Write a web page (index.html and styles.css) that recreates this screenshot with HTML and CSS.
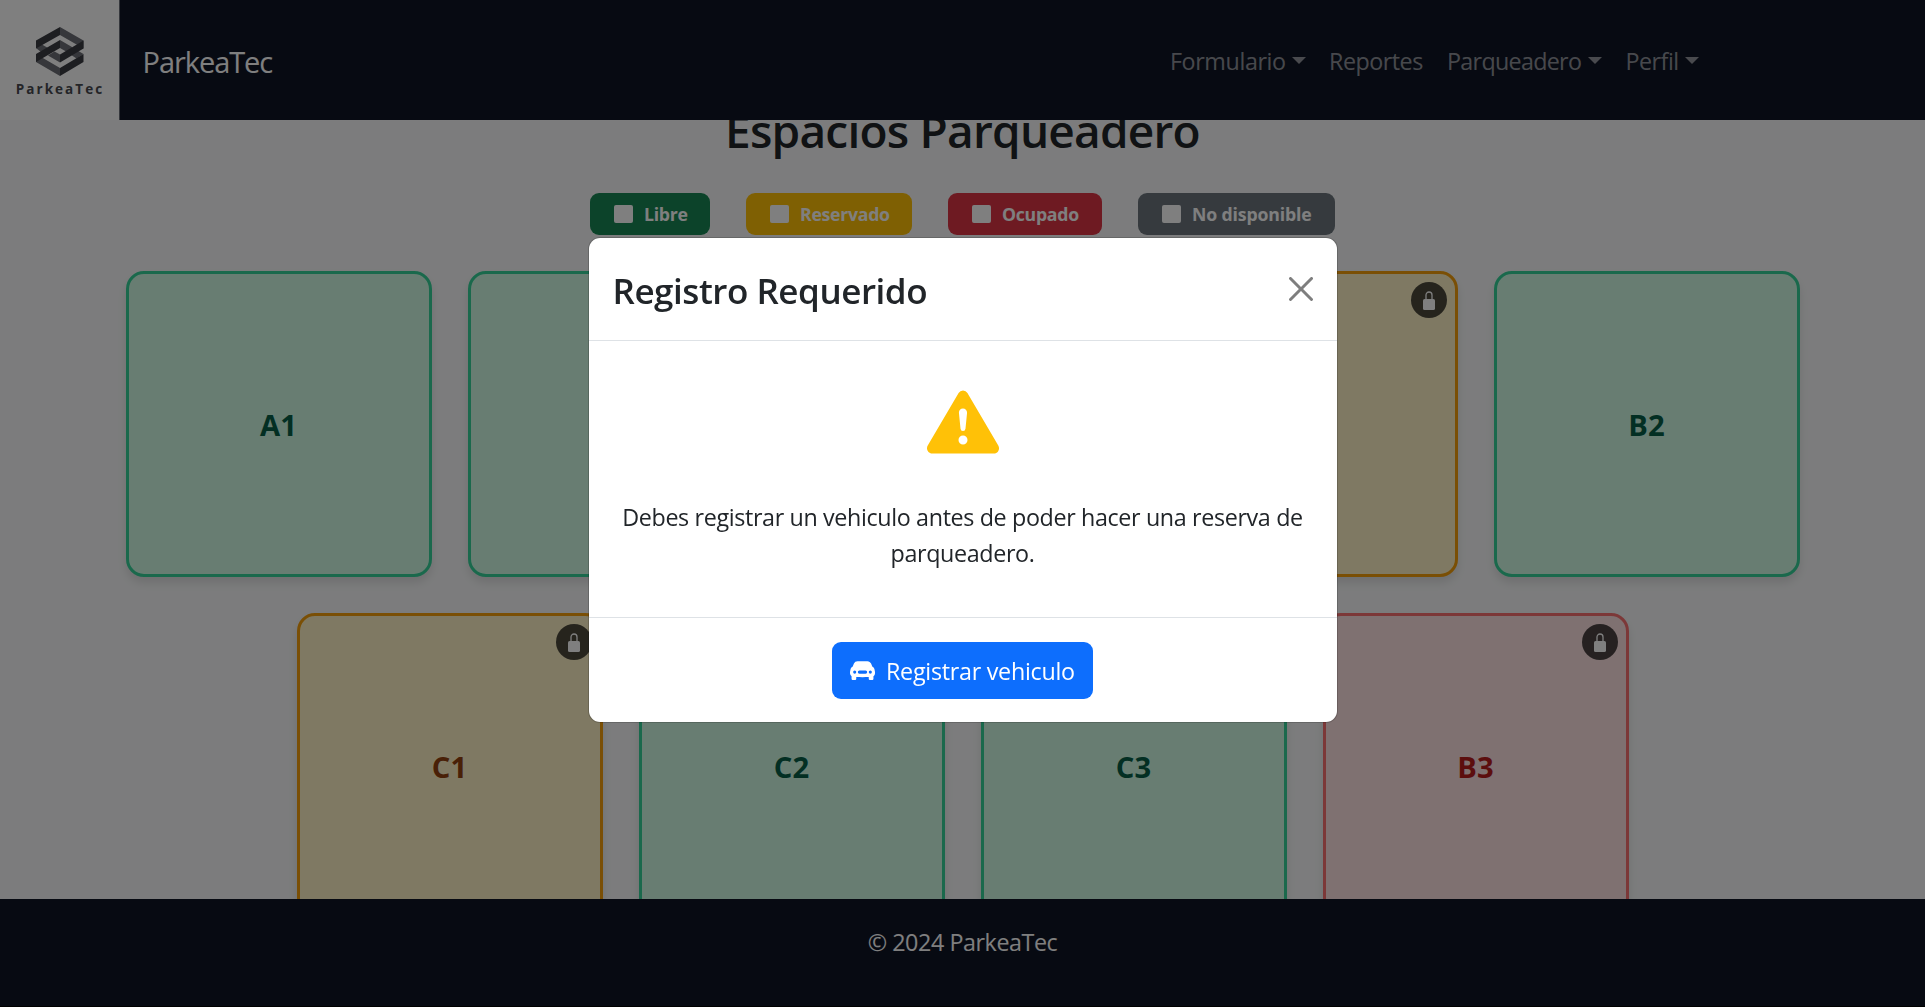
FILE: index.html
```
<!DOCTYPE html>
<html lang="es">
<head>
<meta charset="utf-8">
<title>ParkeaTec</title>
<link rel="stylesheet" href="styles.css">
</head>
<body>
<svg class="sprite" aria-hidden="true">
  <symbol id="lock" viewBox="0 0 12 19">
    <path d="M3 9V4a3 3 0 0 1 6 0v5" fill="none" stroke="currentColor" stroke-width="1.3"/>
    <rect x="0" y="8" width="12" height="11" rx="1.6" fill="currentColor"/>
  </symbol>
</svg>
<header class="navbar">
  <div class="logo">
    <svg class="logo-mark" viewBox="0 0 48 49">
      <path fill="#6d6f76" d="M24 0l23.500 13.500v8L24 8zM24 13l12 7v8l-12-7zM24 35.500l-12-7 6.500-4L24 27.500zM0 27v8l24 14v-8zM0 14v7l5 4 7-4zM47.500 27l-6-3.500-7 4 6 4z"/>
      <path fill="#3b3c43" d="M24 0L0 13.500v8L24 8zM24 13L0 27v8l24-14zM47.500 13.500L24 27.500v8l23.500-14zM47.500 27L24 41v8l23.500-14z"/>
    </svg>
    <span class="logo-name">ParkeaTec</span>
  </div>
  <a class="brand">ParkeaTec</a>
  <nav class="links">
    <a class="link formulario">Formulario<i class="caret"></i></a>
    <a class="link reportes">Reportes</a>
    <a class="link parqueadero">Parqueadero<i class="caret"></i></a>
    <a class="link">Perfil<i class="caret"></i></a>
  </nav>
</header>
<main class="content">
  <h1 class="title">Espacios Parqueadero</h1>
  <div class="legend">
    <span class="tag tag-free"><i class="box"></i>Libre</span>
    <span class="tag tag-reserved"><i class="box"></i>Reservado</span>
    <span class="tag tag-busy"><i class="box"></i>Ocupado</span>
    <span class="tag tag-off"><i class="box"></i>No disponible</span>
  </div>
  <div class="spaces">
    <div class="space free">A1</div>
    <div class="space free">A2</div>
    <div class="space free">A3</div>
    <div class="space reserved">B1<span class="lock"><svg><use href="#lock"/></svg></span></div>
    <div class="space free">B2</div>
    <div class="space reserved">C1<span class="lock"><svg><use href="#lock"/></svg></span></div>
    <div class="space free">C2</div>
    <div class="space free">C3</div>
    <div class="space busy">B3<span class="lock"><svg><use href="#lock"/></svg></span></div>
  </div>
</main>
<footer class="footer">© 2024 ParkeaTec</footer>
<div class="backdrop">
  <section class="modal">
    <div class="modal-header">
      <h2 class="modal-title">Registro Requerido</h2>
      <svg class="close" viewBox="0 0 16 16"><path d="M.293.293a1 1 0 0 1 1.414 0L8 6.586 14.293.293a1 1 0 1 1 1.414 1.414L9.414 8l6.293 6.293a1 1 0 0 1-1.414 1.414L8 9.414l-6.293 6.293a1 1 0 0 1-1.414-1.414L6.586 8 .293 1.707a1 1 0 0 1 0-1.414z"/></svg>
    </div>
    <div class="modal-body">
      <svg class="warning" viewBox="0 0 16 16"><path d="M8.982 1.566a1.13 1.13 0 0 0-1.96 0L.165 13.233c-.457.778.091 1.767.98 1.767h13.713c.889 0 1.438-.99.98-1.767L8.982 1.566zM8 5c.535 0 .954.462.9.995l-.35 3.507a.552.552 0 0 1-1.1 0L7.100 5.995A.905.905 0 0 1 8 5zm.002 6a1 1 0 1 1 0 2 1 1 0 0 1 0-2z"/></svg>
      <p class="message">Debes registrar un vehiculo antes de poder hacer una reserva de parqueadero.</p>
    </div>
    <div class="modal-footer">
      <button class="button">
        <svg class="car" viewBox="0 0 16 16"><path fill-rule="evenodd" d="M2.520 3.515A2.500 2.500 0 0 1 4.820 2h6.362c1 0 1.904.596 2.298 1.515l.792 1.848c.075.175.21.319.38.404.5.25.855.715.965 1.262l.335 1.679c.033.161.049.325.049.49v.413c0 .814-.39 1.543-1 1.997V13.500a.5.5 0 0 1-.5.5h-2a.5.5 0 0 1-.5-.5v-1.338c-1.292.048-2.745.088-4 .088s-2.708-.04-4-.088V13.500a.5.5 0 0 1-.5.5h-2a.5.5 0 0 1-.5-.5v-1.892c-.61-.454-1-1.183-1-1.997v-.413a2.500 2.500 0 0 1 .049-.49l.335-1.680c.11-.546.465-1.012.964-1.261a.807.807 0 0 0 .381-.404l.792-1.848ZM3 10a1 1 0 1 0 0-2 1 1 0 0 0 0 2Zm10 0a1 1 0 1 0 0-2 1 1 0 0 0 0 2ZM6 8a1 1 0 0 0 0 2h4a1 1 0 1 0 0-2H6Z"/></svg>
        <span class="button-label">Registrar vehiculo</span>
      </button>
    </div>
  </section>
</div>
</body>
</html>
```
FILE: styles.css
```
* { box-sizing: border-box; }

body {
  margin: 0;
  height: 1007px;
  display: flex;
  flex-direction: column;
  overflow: hidden;
  background: #f8f9fa;
  color: #212529;
  font-family: "Open Sans", "Noto Sans", sans-serif;
}

h1, h2, p { margin: 0; }

.sprite { position: absolute; width: 0; height: 0; }

/* Navigation */
.navbar {
  flex: none;
  position: relative;
  z-index: 1;
  height: 120px;
  display: flex;
  align-items: center;
  background: #0f1525;
}

.logo {
  width: 120px;
  height: 120px;
  padding-top: 27px;
  display: flex;
  flex-direction: column;
  align-items: center;
  background: #fff;
  border-right: 1px solid #6b6f78;
}

.logo-mark { width: 48px; height: 49px; display: block; }

.logo-name {
  margin-top: 4px;
  font-size: 13.500px;
  line-height: 18px;
  font-weight: 700;
  letter-spacing: 2.050px;
  padding-left: 1px;
  color: #484a50;
}

.brand {
  margin-left: 22.500px;
  padding-top: 2px;
  font-size: 29px;
  letter-spacing: -1.060px;
  color: #fff;
}

.links {
  margin: 2px 0 0 auto;
  padding-right: 224.500px;
  display: grid;
  grid-template-columns: 159px 118px 178.500px 75px;
  font-size: 23.300px;
  color: rgba(255, 255, 255, .55);
}

.link { display: flex; align-items: center; letter-spacing: -.5px; }
.formulario { letter-spacing: -.4px; }
.reportes { letter-spacing: -.5px; }
.parqueadero { letter-spacing: -.7px; }

.caret {
  margin-left: 6.500px;
  margin-bottom: 2px;
  border: 7px solid transparent;
  border-top-color: currentColor;
  border-bottom: 0;
}

/* Parking spaces */
.content {
  flex: 1;
  min-height: 0;
  margin-top: -19px;
  display: flex;
  flex-direction: column;
  align-items: center;
  overflow: hidden;
}

.title {
  font-size: 46px;
  line-height: 58px;
  font-weight: 600;
  letter-spacing: -.78px;
}

.legend { margin-top: 34px; display: flex; gap: 36px; }

.tag {
  height: 42px;
  padding-left: 24px;
  display: flex;
  align-items: center;
  gap: 11px;
  border-radius: 9px;
  color: #fff;
  font-size: 17.700px;
  font-weight: 700;
  letter-spacing: -.28px;
}

.tag-free { width: 120px; background: #198754; }
.tag-reserved { width: 166px; background: #ffc107; }
.tag-busy { width: 154px; background: #dc3545; }
.tag-off { width: 197px; background: #6c757d; letter-spacing: -.15px; }

.box { width: 19px; height: 18px; border-radius: 2px; background: #fff; }

.spaces {
  width: 1674px;
  margin-top: 36px;
  display: flex;
  flex-wrap: wrap;
  justify-content: center;
  gap: 36px;
}

.space {
  position: relative;
  width: 306px;
  height: 306px;
  padding-top: 1px;
  display: flex;
  align-items: center;
  justify-content: center;
  border: 3px solid;
  border-radius: 18px;
  font-size: 29.200px;
  font-weight: 700;
  box-shadow: 0 6px 9px rgba(0, 0, 0, .1);
}

.free { background: #d1fae5; border-color: #34d399; color: #065f46; }
.reserved { background: #fef3c7; border-color: #f59e0b; color: #92400e; }
.busy { background: #fee2e2; border-color: #f87171; color: #b91c1c; }

.lock {
  position: absolute;
  top: 8px;
  right: 8px;
  width: 36px;
  height: 36px;
  display: flex;
  align-items: center;
  justify-content: center;
  border-radius: 50%;
  background: rgba(0, 0, 0, .7);
  color: #fff;
}

.lock svg { width: 12px; height: 19px; }

/* Footer */
.footer {
  flex: none;
  position: relative;
  height: 108px;
  padding-top: 27px;
  background: #0f1525;
  border-bottom: 1px solid #000;
  color: #fff;
  font-size: 23.300px;
  line-height: 33px;
  letter-spacing: -.43px;
  text-align: center;
}

/* Dialog */
.backdrop {
  position: fixed;
  inset: 0;
  z-index: 2;
  display: flex;
  justify-content: center;
  align-items: flex-start;
  padding-top: 237px;
  background: rgba(0, 0, 0, .5);
}

.modal {
  width: 750px;
  background: #fff;
  background-clip: padding-box;
  border: 1px solid rgba(0, 0, 0, .175);
  border-radius: 12px;
}

.modal-header {
  height: 103px;
  padding: 0 24px 0 24px;
  display: flex;
  align-items: center;
  justify-content: space-between;
  border-bottom: 1px solid #dee2e6;
}

.modal-title {
  padding: 3px 0 0 0;
  font-size: 35px;
  font-weight: 600;
  letter-spacing: -.46px;
}

.close { width: 24px; height: 24px; opacity: .5; }

.modal-body {
  height: 276px;
  padding: 45px 24px 0;
  text-align: center;
}

.warning { display: block; width: 72px; height: 72px; margin: 0 auto; fill: #ffc107; }

.message {
  margin-top: 41px;
  font-size: 23.300px;
  line-height: 36px;
  letter-spacing: -.36px;
}

.modal-footer {
  height: 105px;
  display: flex;
  align-items: center;
  justify-content: center;
  border-top: 1px solid #dee2e6;
}

.button {
  width: 261px;
  height: 57px;
  padding: 0 0 0 18px;
  display: flex;
  align-items: center;
  gap: 11px;
  border: 0;
  border-radius: 9px;
  background: #0d6efd;
  color: #fff;
  font: 400 23.300px "Open Sans", "Noto Sans", sans-serif;
  letter-spacing: -.27px;
}

.button-label { padding-top: 2px; }

.car { width: 25px; height: 25px; fill: currentColor; }
```
